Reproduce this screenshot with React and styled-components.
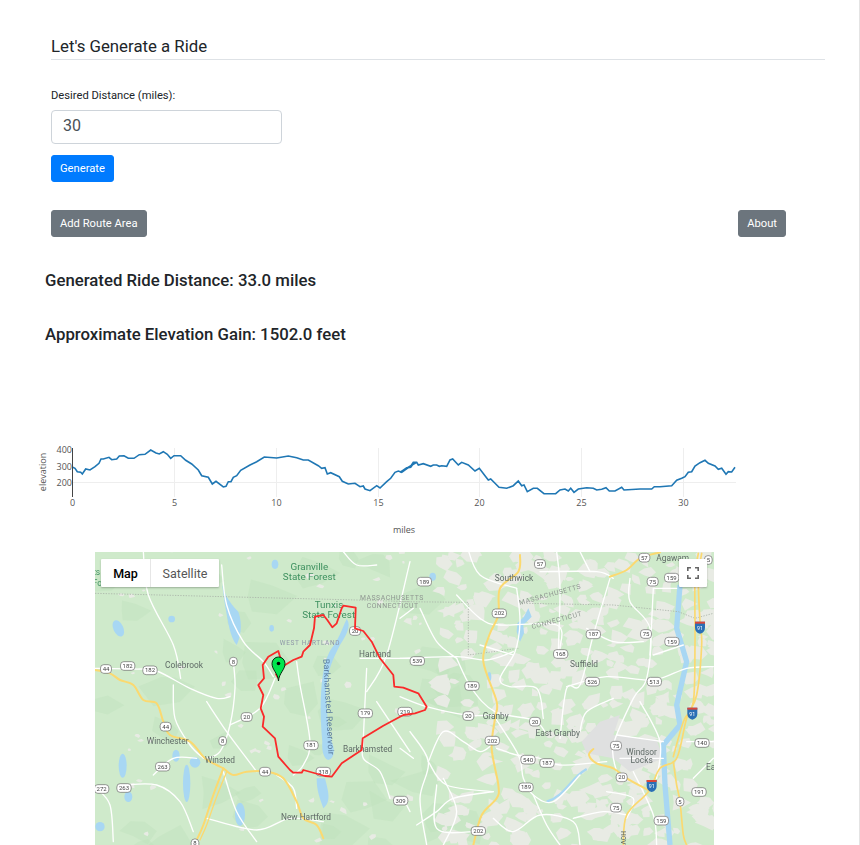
import React from 'react';
import styled, { createGlobalStyle } from 'styled-components';

const Global = createGlobalStyle`
  html, body { margin: 0; padding: 0; background: #fff; overflow: hidden; }
  body { font-family: Roboto, "Liberation Sans", sans-serif; color: #212529; }
`;

const Page = styled.div`
  width: 860px; height: 845px; box-sizing: border-box;
  border-right: 1px solid #e4e4e4; overflow: hidden;
`;
const Form = styled.section`
  padding: 37px 34px 0 51px;
`;
const Title = styled.h4`
  margin: 0; font-size: 16.8px; line-height: 19px; font-weight: 400;
  padding-bottom: 3px; border-bottom: 1px solid #dee2e6;
`;
const Label = styled.label`
  display: block; margin-top: 29px; font-size: 11.2px; line-height: 14px;
`;
const Input = styled.input`
  display: block; box-sizing: border-box; margin-top: 7px; width: 231px; height: 34px;
  padding: 0 11px 3px; font: 400 16px Roboto, sans-serif; color: #495057;
  border: 1px solid #ced4da; border-radius: 4px; background: #fff;
`;
const Button = styled.button`
  display: block; height: 27px; padding: 0 8px; border: 1px solid ${p => p.$bg};
  border-radius: 3px; background: ${p => p.$bg}; color: #fff;
  font: 400 11.2px Roboto, sans-serif; white-space: nowrap;
`;
const GenerateWrap = styled.div`
  margin-top: 11px;
`;
const ActionRow = styled.div`
  display: flex; justify-content: space-between; margin: 28px 39px 0 0;
`;
const Results = styled.section`
  padding-left: 45px;
`;
const ResultLine = styled.h5`
  margin: ${p => p.$top}px 0 0; font-size: 16.75px; line-height: 20px; font-weight: 500;
`;
const ChartSvg = styled.svg`
  display: block; margin-top: 96px;
`;
const MapFrame = styled.div`
  position: relative; margin: 7px 0 0 95px; width: 619px; height: 293px;
  overflow: hidden; background: #cfeacb;
`;
const MapSvg = styled.svg`
  display: block; filter: blur(0.45px);
`;
const MapControl = styled.div`
  position: absolute; left: 6px; top: 7px; height: 28px; display: flex;
  background: #fff; box-shadow: 0 1px 2px rgba(0,0,0,.25); border-radius: 1px;
`;
const MapTab = styled.div`
  display: flex; align-items: center; justify-content: center; width: ${p => p.$w}px;
  font-size: 12.5px; color: ${p => p.$active ? '#000' : '#565656'};
  font-weight: ${p => p.$active ? 500 : 400};
  border-right: ${p => p.$active ? '1px solid #e6e6e6' : 'none'};
`;
const FullscreenBtn = styled.div`
  position: absolute; left: 584px; top: 7px; width: 28px; height: 28px; background: #fff;
  display: flex; align-items: center; justify-content: center;
  box-shadow: 0 1px 2px rgba(0,0,0,.25); border-radius: 1px;
`;

const p1 = [[158,97],[165,100],[172,110],[182,112],[187,117],[197,102],[210,105],[225,95],[237,85],[243,72],[250,72],[267,67],[275,74],[290,72],[298,63],[312,62],[325,70],[342,70],[358,59],[375,58],[392,45],[408,54],[418,57],[430,50],[442,58],[452,70],[462,62],[482,62],[497,76],[515,87],[535,105],[545,122],[565,127],[577,147],[588,139],[610,156],[618,154],[625,140],[633,140],[640,127],[650,122],[662,106],[690,90],[710,80],[733,66],[770,69],[805,63],[830,68],[850,75],[865,75],[895,92],[905,100],[915,98],[922,117],[932,113],[958,125],[967,139],[985,147],[1005,145],[1020,155],[1030,153],[1035,162],[1050,167],[1070,152],[1080,159],[1100,140],[1112,130],[1125,112],[1135,108],[1145,112],[1165,98],[1172,97],[1182,83],[1190,82]];
const p2 = [[0,112],[20,98],[30,97],[40,82],[50,82],[55,90],[70,86],[92,94],[100,90],[110,90],[118,94],[125,92],[140,94],[150,75],[158,72],[175,90],[185,82],[205,90],[225,108],[238,100],[255,122],[265,135],[272,132],[285,145],[297,157],[320,160],[340,152],[355,138],[365,152],[372,150],[382,170],[400,160],[412,160],[432,176],[467,176],[480,165],[495,162],[505,168],[512,160],[522,172],[535,162],[560,158],[580,160],[590,165],[605,163],[618,158],[628,168],[645,168],[665,157],[672,165],[720,162],[755,162],[763,155],[780,155],[815,152],[830,136],[845,130],[855,125],[865,112],[875,110],[885,93],[900,83],[915,76],[925,85],[945,93],[955,103],[965,100],[978,118],[985,110],[995,111],[1005,97]];
const curve = [...p1.map(([x,y]) => [x/3+20, y/3+435]), ...p2.map(([x,y]) => [x/3+400, y/3+435])]
  .map(([x,y]) => `${x.toFixed(1)},${y.toFixed(1)}`).join(' ');

const Chart = () => (
  <ChartSvg width="859" height="105" viewBox="0 440 859 105" fontFamily="'Open Sans', sans-serif" fontSize="9" fill="#555">
    {[174.5,276.5,378.5,479.5,581.5,683.5].map(x => <line key={x} x1={x} x2={x} y1="448" y2="497" stroke="#eee" />)}
    <line x1="72" x2="736" y1="482.5" y2="482.5" stroke="#eee" />
    <polyline points={curve} fill="none" stroke="#1f77b4" strokeWidth="1.6" />
    <line x1="72.5" x2="72.5" y1="448" y2="497" stroke="#444" />
    {[['400',453],['300',470],['200',486]].map(([t,y]) => <text key={t} x="72" y={y} textAnchor="end">{t}</text>)}
    {[[72.5,'0'],[174.5,'5'],[276.5,'10'],[378.5,'15'],[479.5,'20'],[581.5,'25'],[683.5,'30']].map(([x,t]) => <text key={t} x={x} y="506" textAnchor="middle">{t}</text>)}
    <text transform="translate(46,472) rotate(-90)" textAnchor="middle">elevation</text>
    <text x="404" y="533" textAnchor="middle">miles</text>
  </ChartSvg>
);

// seeded scatter of town patches and forest blotches, drawn in page coordinates
const rnd = (() => { let s = 12345; return () => (s = (s * 16807) % 2147483647) / 2147483647; })();
const blob = (cx, cy, r) => {
  const n = 6, pts = [];
  for (let i = 0; i < n; i++) {
    const a = i / n * Math.PI * 2, q = r * (0.45 + rnd());
    pts.push(`${(cx + Math.cos(a) * q * 1.3).toFixed(1)},${(cy + Math.sin(a) * q).toFixed(1)}`);
  }
  return pts.join(' ');
};
const towns = [];
for (let i = 0; i < 420; i++) {
  const x = 440 + rnd() * 280, y = 550 + rnd() * 300;
  towns.push(blob(x, y, 3 + rnd() * 5));
}
for (let i = 0; i < 70; i++) {
  const x = 95 + rnd() * 350, y = 550 + rnd() * 300;
  towns.push(blob(x, y, 1.2 + rnd() * 2));
}
const forests = [];
for (let i = 0; i < 45; i++) {
  const x = 95 + rnd() * 400, y = 550 + rnd() * 300;
  forests.push(blob(x, y, 8 + rnd() * 12));
}

// Catmull-Rom smoothing so roads bend rather than kink
const smooth = (str) => {
  const p = str.trim().split(/\s+/).map(s => s.split(',').map(Number));
  let d = `M${p[0][0]},${p[0][1]}`;
  for (let i = 0; i < p.length - 1; i++) {
    const a = p[i - 1] || p[i], b = p[i], c = p[i + 1], e = p[i + 2] || c;
    const c1 = [b[0] + (c[0] - a[0]) / 6, b[1] + (c[1] - a[1]) / 6];
    const c2 = [c[0] - (e[0] - b[0]) / 6, c[1] - (e[1] - b[1]) / 6];
    d += ` C${c1[0].toFixed(1)},${c1[1].toFixed(1)} ${c2[0].toFixed(1)},${c2[1].toFixed(1)} ${c[0]},${c[1]}`;
  }
  return d;
};

const L = ({ children }) => <g transform="translate(90 545) scale(0.33333)">{children}</g>;
const R = ({ children }) => <g transform="translate(400 545) scale(0.33333)">{children}</g>;
const Road = ({ d, w = 4, c = '#fff' }) => <path d={smooth(d)} fill="none" stroke={c} strokeWidth={w} strokeLinejoin="round" strokeLinecap="round" />;
const Shield = ({ x, y, t }) => {
  const w = t.length * 10 + 13;
  return (
    <g>
      <rect x={x - w/2} y={y - 13} width={w} height="26" rx="10" fill="#fff" stroke="#666" strokeWidth="2" />
      <text x={x} y={y + 6} textAnchor="middle" fontSize="18" fill="#444">{t}</text>
    </g>
  );
};
const Interstate = ({ x, y }) => (
  <g>
    <path d={`M${x-15},${y-15} h30 v18 q0,14 -15,18 q-15,-4 -15,-18 z`} fill="#2a6fb5" />
    <rect x={x-15} y={y-15} width="30" height="6" fill="#d9473a" />
    <text x={x} y={y + 9} textAnchor="middle" fontSize="16" fill="#fff">91</text>
  </g>
);
const Place = ({ x, y, t, size = 25, c = '#5f6a66', ls = 0 }) => (
  <text x={x} y={y} textAnchor="middle" fontSize={size} fill={c} letterSpacing={ls}>{t}</text>
);

const routePts = [[115,250],[108,238],[135,210],[160,195],[185,185],[190,170],[210,150],[222,100],[225,65],[250,60],[262,75],[277,97],[290,85],[305,40],[310,32],[347,38],[345,100],[370,108],[395,140],[420,190],[460,240],[463,275],[490,278],[535,295],[560,335],[555,345],[525,355],[490,360],[430,392],[368,430],[365,465],[305,505],[275,545],[255,543],[190,525],[185,533],[160,533],[150,525],[115,485],[105,430],[68,395],[72,365],[62,340],[70,300],[55,270],[72,250],[68,210],[85,185],[115,168],[120,185],[125,195]]
  .map(([x,y]) => `${(x/3+240).toFixed(1)},${(y/3+595).toFixed(1)}`).join(' ');

const leftRoads = [
  '160,20 175,150 250,300 272,400','15,370 130,372 200,378 300,430 380,460 420,455','430,350 435,430 420,540 390,620 350,640',
  '250,420 255,520 300,600 340,640','420,540 510,490 555,400','395,60 410,180 460,290 520,350 550,395','620,350 630,420 660,590 640,660 610,690',
  '830,370 820,580 820,640 870,680 900,760','960,50 890,330 830,440','810,340 960,340','350,820 500,855 600,820 700,830','20,730 60,780 70,890',
  '350,470 410,560 470,640 500,680','190,690 250,640 320,640','100,720 200,720 270,770 310,860','560,690 610,730 620,790','860,470 960,620','940,760 960,800','400,680 440,800 500,890','760,20 800,60 860,60'
];
const rightRoads = [
  '0,340 170,335 260,345 340,320','170,340 215,430 285,500 400,525 435,560','0,455 80,485 200,510 280,510','60,190 110,290 170,340','170,150 240,220 300,240 470,240 480,310',
  '350,130 360,230 345,320 300,400 330,425 410,430 430,520','630,100 580,270 540,420 500,430 480,580','500,425 620,395 760,405 860,370 940,365','690,100 690,170 750,250 740,400 700,460 640,600 650,680',
  '280,510 355,630 370,700 400,750 460,770 540,690','85,650 130,560 190,590 240,620 275,600','85,650 140,720 280,740','110,720 110,850 220,860','50,840 110,800 160,760 280,740','290,610 350,630 420,640 480,660 620,650',
  '400,750 440,840 480,900','720,470 780,590 770,700','650,570 790,590','660,640 790,640','700,680 760,810 770,900','520,820 610,800 680,810','200,0 240,90 350,130','420,80 590,80 640,100','760,130 830,130','760,330 850,300','860,590 940,590','880,700 940,640',
  '470,20 480,130 475,320','540,20 570,80','560,250 640,290 730,290','760,130 750,330','640,460 560,500 540,560','130,700 170,800 130,900','280,820 340,860 420,810 520,830 540,900','620,740 700,760 680,820','40,190 0,220','240,300 340,330','30,560 85,650 60,760 80,900','0,610 40,640'
];

const MapArt = () => (
  <MapSvg width="619" height="293" viewBox="95 552 619 293" fontFamily="Roboto, sans-serif">
    <rect x="95" y="552" width="619" height="293" fill="#cfeacb" />
    {forests.map((d, i) => <polygon key={i} points={d} fill="#bfe0bb" opacity=".4" />)}
    {towns.map((d, i) => <polygon key={i} points={d} fill="#e8ebe4" />)}
    <R>
      <polygon points="545,590 600,530 660,510 640,570 770,585 790,640 690,680 640,640 560,625" fill="#dfe0e0" />
    </R>
    <L>
      <path d="M395,110 C400,140 415,170 445,200 C460,240 450,280 440,300 C420,275 415,235 405,180Z" fill="#a8d7f3" />
      <path d="M770,222 C755,255 745,285 725,310 C708,335 700,370 695,420 C690,470 692,530 697,590 C695,615 700,640 715,645 C735,640 735,610 725,590 C715,560 710,500 708,440 C710,380 730,340 750,300 C770,270 785,240 770,222Z" fill="#a8d7f3" />
      <path d="M680,700 L705,700 C715,740 725,770 700,790 C690,760 680,740 680,700Z" fill="#a8d7f3" />
      <ellipse cx="85" cy="250" rx="15" ry="26" fill="#a8d7f3" transform="rotate(-25 85 250)" />
      <ellipse cx="555" cy="58" rx="10" ry="14" fill="#a8d7f3" />
      <ellipse cx="98" cy="662" rx="12" ry="36" fill="#a8d7f3" />
      <ellipse cx="290" cy="715" rx="11" ry="56" fill="#a8d7f3" />
      <ellipse cx="315" cy="652" rx="16" ry="16" fill="#a8d7f3" />
      <ellipse cx="258" cy="632" rx="11" ry="18" fill="#a8d7f3" />
      <ellipse cx="450" cy="808" rx="15" ry="35" fill="#a8d7f3" />
      <ellipse cx="115" cy="755" rx="12" ry="16" fill="#a8d7f3" />
      <ellipse cx="545" cy="250" rx="7" ry="10" fill="#a8d7f3" />
      <ellipse cx="245" cy="222" rx="10" ry="10" fill="#a8d7f3" />
      <ellipse cx="30" cy="845" rx="14" ry="14" fill="#a8d7f3" />
      <polyline points="15,145 400,155 800,165 960,170" fill="none" stroke="#a9b3a8" strokeWidth="2.5" strokeDasharray="4 4" />
      {leftRoads.map(d => <Road key={d} d={d} />)}
      <Road c="#fbd970" w="6" d="15,375 60,385 90,405 130,420 160,465 200,475 220,530 240,570 300,590 345,640 380,660 400,670 430,690 470,680 530,680 580,700 620,770 640,820 680,840 700,880" />
      <Road c="#fbd970" w="6" d="400,670 370,750 340,840 320,885" />
      <Road c="#fbd970" w="4" d="410,680 380,755 350,840 330,885" />
    </L>
    <R>
      <polyline points="840,120 830,250 860,350 830,480 840,540 790,600 795,720 810,900" fill="none" stroke="#a8d7f3" strokeWidth="16" strokeLinejoin="round" />
      <path d="M385,190 L395,215 L370,240 L372,265 L360,290 L350,260 L352,235 L372,215Z" fill="#a8d7f3" />
      <ellipse cx="98" cy="95" rx="10" ry="12" fill="#a8d7f3" />
      <ellipse cx="268" cy="395" rx="6" ry="14" fill="#a8d7f3" />
      <path d="M440,770 C500,750 510,700 560,672" fill="none" stroke="#a8d7f3" strokeWidth="7" />
      <polyline points="0,170 205,172 205,330 355,310" fill="none" stroke="#a9b3a8" strokeWidth="2.5" strokeDasharray="4 4" />
      <polyline points="380,175 640,180 835,200 885,220 940,205" fill="none" stroke="#a9b3a8" strokeWidth="2.5" strokeDasharray="4 4" />
      {rightRoads.map(d => <Road key={d} d={d} />)}
      <Road c="#fbd970" w="6" d="630,95 680,75 720,40 780,22" />
      <Road c="#fbd970" w="6" d="360,30 355,80 300,130 295,210 268,270 250,350 290,470 285,520 275,610 295,720 290,760 245,810 220,900" />
      <Road c="#fbd970" w="5" d="905,25 895,100 900,230 905,300 890,450 860,520 830,640 780,670 745,740 680,810 670,900" />
      <Road c="#fbd970" w="5" d="895,25 885,100 885,300 880,470 850,530 820,635" />
      <Road c="#fbd970" w="6" d="580,612 567,630 590,655 640,670 680,700 745,735" />
      <Road c="#fbd970" w="5" d="820,650 830,720 840,770 850,870 860,900" />
    </R>
    <L>
      <Place x={658} y={75} t="Granville" c="#3f9160" size={29.5} />
      <Place x={658} y={105} t="State Forest" c="#3f9160" size={29.5} />
      <Place x={717} y={189} t="Tunxis" c="#3f9160" size={29.5} />
      <Place x={716} y={218} t="State Forest" c="#3f9160" size={29.5} />
      <Place x={20} y={90} t="ts" c="#3f9160" size={25} />
      <Place x={22} y={122} t="Fo" c="#3f9160" size={25} />
      <Place x={660} y={299} t="WEST HARTLAND" size={19.5} ls={2} c="#8f97a8" />
      <text x="810" y="164" fontSize="20.5" letterSpacing="1.6" fill="#8f9691">MASSACHUSETTS</text>
      <text x="830" y="188" fontSize="20.5" letterSpacing="1.6" fill="#8f9691">CONNECTICUT</text>
      <Place x={282} y={369} t="Colebrook" />
      <Place x={233} y={597} t="Winchester" />
      <Place x={390} y={654} t="Winsted" />
      <Place x={855} y={337} t="Hartland" />
      <Place x={833} y={621} t="Barkhamsted" />
      <Place x={648} y={826} t="New Hartford" />
      <text transform="translate(700 342) rotate(87)" fontSize="26" letterSpacing="1" fill="#5a7b9d">Barkhamsted Reservoir</text>
      {[[48,372,'44'],[113,363,'182'],[180,376,'182'],[430,350,'8'],[470,516,'20'],[227,545,'44'],[398,588,'8'],[663,601,'181'],[826,505,'179'],[945,500,'219'],[795,258,'20'],[218,665,'263'],[35,732,'272'],[102,729,'263'],[525,680,'44'],[700,680,'318'],[932,767,'309'],[315,895,'8']].map(([x,y,t]) => <Shield key={`${x}${t}`} x={x} y={y} t={t} />)}
    </L>
    <R>
      <Place x={342} y={107} t="Southwick" />
      <Place x={818} y={47} t="Agawam" />
      <Place x={552} y={366} t="Suffield" />
      <Place x={287} y={522} t="Granby" />
      <Place x={473} y={574} t="East Granby" />
      <Place x={725} y={629} t="Windsor" />
      <Place x={725} y={654} t="Locks" />
      <Place x={932} y={676} t="Ea" />
      <text transform="translate(452 155) rotate(-15)" textAnchor="middle" fontSize="20.5" letterSpacing="1.6" fill="#8f9691">MASSACHUSETTS</text>
      <text transform="translate(472 232) rotate(-15)" textAnchor="middle" fontSize="20.5" letterSpacing="1.6" fill="#8f9691">CONNECTICUT</text>
      <text transform="translate(664 858) rotate(90)" fontSize="20" fill="#5f6a66">HOV</text>
      {[[420,57,'57'],[733,38,'57'],[73,110,'189'],[298,205,'202'],[580,268,'187'],[738,267,'75'],[758,110,'75'],[815,98,'159'],[816,290,'159'],[482,327,'168'],[52,348,'539'],[577,410,'526'],[763,410,'513'],[216,423,'189'],[205,513,'20'],[405,530,'20'],[277,587,'202'],[648,602,'75'],[906,594,'140'],[384,644,'540'],[441,654,'187'],[665,697,'20'],[378,727,'189'],[897,741,'191'],[648,788,'75'],[784,827,'159'],[235,858,'202'],[840,770,'5'],[925,45,'5']].map(([x,y,t]) => <Shield key={`${x}${t}`} x={x} y={y} t={t} />)}
      <Interstate x={900} y={245} />
      <Interstate x={877} y={503} />
      <Interstate x={755} y={720} />
    </R>
    <polyline points={routePts} fill="none" stroke="#fa2a2a" strokeWidth="1.8" strokeLinejoin="round" />
    <path d="M278.5,681 C278,673 272,670 272,663.5 A6.5,6.5 0 1 1 285,663.5 C285,670 279,673 278.5,681Z" fill="#00e64d" stroke="#0a2a12" strokeWidth="1" />
    <circle cx="278.5" cy="663.5" r="1.8" fill="#000" />
  </MapSvg>
);

export default function App() {
  return (
    <Page>
      <Global />
      <Form>
        <Title>Let's Generate a Ride</Title>
        <Label htmlFor="dist">Desired Distance (miles):</Label>
        <Input id="dist" type="number" defaultValue="30" />
        <GenerateWrap><Button $bg="#007bff">Generate</Button></GenerateWrap>
        <ActionRow>
          <Button $bg="#6c757d">Add Route Area</Button>
          <Button $bg="#6c757d">About</Button>
        </ActionRow>
      </Form>
      <Results>
        <ResultLine $top={33}>Generated Ride Distance: 33.0 miles</ResultLine>
        <ResultLine $top={34}>Approximate Elevation Gain: 1502.0 feet</ResultLine>
      </Results>
      <Chart />
      <MapFrame>
        <MapArt />
        <MapControl>
          <MapTab $w={49} $active>Map</MapTab>
          <MapTab $w={68}>Satellite</MapTab>
        </MapControl>
        <FullscreenBtn>
          <svg width="12" height="12" viewBox="0 0 12 12" fill="none" stroke="#666" strokeWidth="1.6">
            <path d="M.8,4 V.8 H4 M8,.8 H11.2 V4 M11.2,8 V11.2 H8 M4,11.2 H.8 V8" />
          </svg>
        </FullscreenBtn>
      </MapFrame>
    </Page>
  );
}
